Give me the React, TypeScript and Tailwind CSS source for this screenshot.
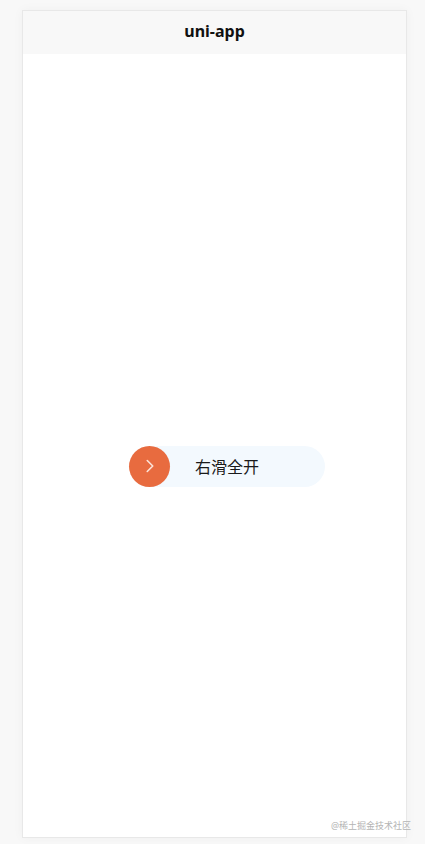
import { ChevronRight } from "lucide-react"

export default function App() {
  return (
    <div className="relative flex h-[844px] w-[425px] flex-col overflow-hidden bg-[#f8f8f8] pb-[6px] pl-[22px] pr-[18px] pt-[10px] font-['Noto_Sans','Noto_Sans_CJK_SC',sans-serif]">
      {/* phone frame */}
      <div className="flex flex-1 flex-col border border-[#e8e8e8] bg-white shadow-[0_0_10px_rgba(0,0,0,0.04)]">
        <div className="flex h-[43px] shrink-0 items-center justify-center bg-[#f8f8f8] pb-[4px] text-[16px] font-bold text-[#111111]">
          uni-app
        </div>
        <div className="flex flex-1 items-center pl-[106px] pt-[41px]">
          <div className="relative h-[41px] w-[196px] rounded-full bg-[#f3f9fe] pl-[66px] text-[16px] leading-[43px] text-[#1a1a1a]">
            右滑全开
            <div className="absolute left-0 top-0 flex h-[41px] w-[41px] items-center justify-center rounded-full bg-[#e86b3f]">
              <ChevronRight className="h-[22px] w-[22px] text-[#fbe3d8]" strokeWidth={1.75} />
            </div>
          </div>
        </div>
      </div>
      <span className="absolute bottom-[12px] right-[14px] text-[9px] leading-[12px] text-[#b4b4b4]">@稀土掘金技术社区</span>
    </div>
  )
}
